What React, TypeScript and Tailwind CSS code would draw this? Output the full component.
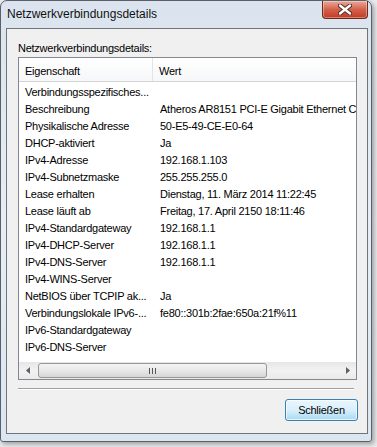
import React from 'react'

const rows: [string, string][] = [
  ['Verbindungsspezifisches...', ''],
  ['Beschreibung', 'Atheros AR8151 PCI-E Gigabit Ethernet Controller'],
  ['Physikalische Adresse', '50-E5-49-CE-E0-64'],
  ['DHCP-aktiviert', 'Ja'],
  ['IPv4-Adresse', '192.168.1.103'],
  ['IPv4-Subnetzmaske', '255.255.255.0'],
  ['Lease erhalten', 'Dienstag, 11. März 2014 11:22:45'],
  ['Lease läuft ab', 'Freitag, 17. April 2150 18:11:46'],
  ['IPv4-Standardgateway', '192.168.1.1'],
  ['IPv4-DHCP-Server', '192.168.1.1'],
  ['IPv4-DNS-Server', '192.168.1.1'],
  ['IPv4-WINS-Server', ''],
  ['NetBIOS über TCPIP ak...', 'Ja'],
  ['Verbindungslokale IPv6-...', 'fe80::301b:2fae:650a:21f%11'],
  ['IPv6-Standardgateway', ''],
  ['IPv6-DNS-Server', ''],
]

function CloseButton() {
  return (
    <div className="absolute top-0 right-[3px] w-[46px] h-[18px] rounded-b-[4px] border border-t-0 border-[#6b2a1e] bg-gradient-to-b from-[#e9a99a] via-[#d4604a] to-[#c23a22] flex items-center justify-center shadow-[inset_0_0_0_1px_rgba(255,255,255,0.35)]">
      <svg width="14" height="11" viewBox="0 0 14 11">
        <path d="M2 1.5 L12 9.5 M12 1.5 L2 9.5" stroke="#4a2a24" strokeWidth="4.2" strokeLinecap="round" />
        <path d="M2 1.5 L12 9.5 M12 1.5 L2 9.5" stroke="#ffffff" strokeWidth="2.4" strokeLinecap="round" />
      </svg>
    </div>
  )
}

function Scrollbar() {
  return (
    <div className="h-[17px] shrink-0 flex items-center bg-gradient-to-b from-[#e6e6e6] via-[#f2f2f2] to-[#eaeaea]">
      <div className="w-[17px] h-full flex items-center justify-center">
        <svg width="4" height="7" viewBox="0 0 4 7">
          <path d="M4 0 L0 3.5 L4 7 Z" fill="#606060" />
        </svg>
      </div>
      <div className="ml-[2px] w-[229px] h-[15px] rounded-[3px] border border-[#979797] bg-gradient-to-b from-[#f4f4f4] via-[#e8e8e8] to-[#d6d6d6] flex items-center justify-center gap-[2px]">
        <div className="w-px h-[6px] bg-[#555]" />
        <div className="w-px h-[6px] bg-[#555]" />
        <div className="w-px h-[6px] bg-[#555]" />
      </div>
      <div className="flex-1" />
      <div className="w-[17px] h-full flex items-center justify-center">
        <svg width="4" height="7" viewBox="0 0 4 7">
          <path d="M0 0 L4 3.5 L0 7 Z" fill="#606060" />
        </svg>
      </div>
    </div>
  )
}

export default function App() {
  return (
    <div
      className="w-[377px] h-[447px] bg-[#e9ebed] overflow-hidden text-black"
      style={{ fontFamily: '"Liberation Sans", Arial, sans-serif' }}
    >
      <div className="relative w-[372px] h-[442px] rounded-t-[7px] rounded-b-[3px] border border-[#5b6068] bg-gradient-to-b from-[#dbe4ee] via-[#e6edf4] to-[#dbe6f1] flex flex-col shadow-[2px_2px_5px_rgba(0,0,0,0.35)]">
        <div className="h-[27px] pl-[6px] pt-[6px] text-[12px] leading-[15px] text-[#111]">Netzwerkverbindungsdetails</div>
        <CloseButton />
        <div className="ml-[5px] mr-[3px] flex-1 mb-[7px] border border-[#70757c] bg-[#f0f0f0] flex flex-col text-[11px] leading-[13px] tracking-[-0.25px]">
          <div className="pl-[11px] pt-[13px] h-[28px]">Netzwerkverbindungsdetails:</div>
          <div className="ml-[11px] w-[339px] h-[323px] border border-[#828790] bg-white flex flex-col">
            <div className="h-[24px] shrink-0 flex bg-gradient-to-b from-white to-[#f6f7f8] border-b border-[#d5d5d5]">
              <div className="w-[134px] border-r border-[#e3e4e6] pl-[6px] pt-[7px]">Eigenschaft</div>
              <div className="flex-1 pl-[6px] pt-[7px]">Wert</div>
            </div>
            <div className="flex-1 flex flex-col overflow-hidden pt-[2px]">
              {rows.map(([k, v]) => (
                <div key={k} className="h-[17px] shrink-0 flex items-center whitespace-nowrap">
                  <div className="w-[135px] pl-[6px] shrink-0 overflow-hidden">{k}</div>
                  <div className="pl-[6px]">{v}</div>
                </div>
              ))}
            </div>
            <Scrollbar />
          </div>
          <div className="ml-[11px] w-[336px] mt-[8px] h-[2px] border-t border-[#a0a0a0] border-b border-b-white" />
          <div className="flex justify-end pr-[9px] pt-[9px]">
            <div className="w-[73px] h-[22px] rounded-[3px] border border-[#3c7fb1] bg-gradient-to-b from-[#eaf6fd] via-[#d9f0fc] to-[#a7d9f5] shadow-[inset_0_0_0_1px_rgba(255,255,255,0.7)] flex items-center justify-center">
              Schließen
            </div>
          </div>
        </div>
      </div>
    </div>
  )
}
